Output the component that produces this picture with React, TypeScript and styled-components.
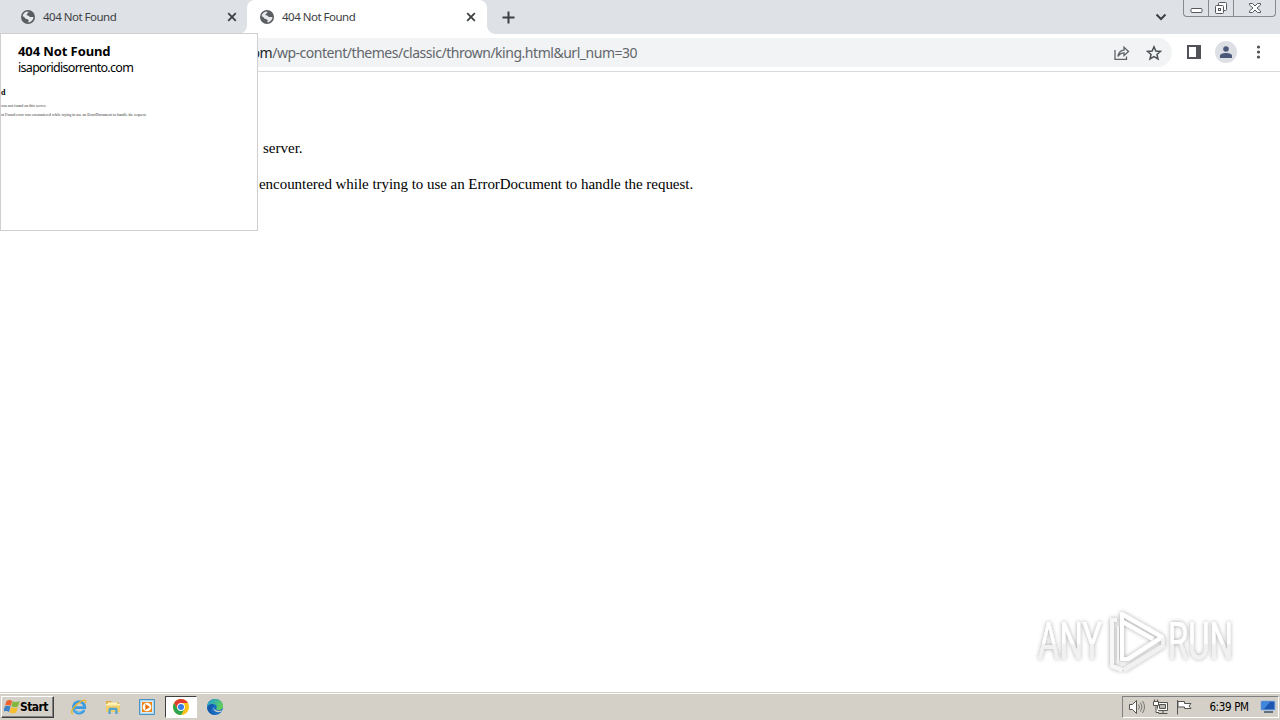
import React from "react";
import styled, { createGlobalStyle } from "styled-components";

const Global = createGlobalStyle`
  * { box-sizing: border-box; }
  body { margin: 0; overflow: hidden; background: #fff; }
`;
const ui = `"DejaVu Sans Condensed", "DejaVu Sans", sans-serif`;
const light = `"Noto Sans", "Open Sans", sans-serif`;

const Screen = styled.div`
  width: 1280px; height: 720px; display: flex; flex-direction: column;
  position: relative; overflow: hidden; background: #fff; font-family: ${light};
`;
const TabStrip = styled.div`
  height: 34px; flex: none; display: flex; background: #dee1e6; color: #3c4043;
`;
const Tab = styled.div<{ $active?: boolean }>`
  width: ${p => (p.$active ? 240 : 247)}px; height: 34px; flex: none;
  display: flex; align-items: center; position: relative;
  padding: 0 9px 0 ${p => (p.$active ? 13 : 21)}px;
  background: ${p => (p.$active ? "#fff" : "transparent")};
  border-radius: 8px 8px 0 0;
  &::before, &::after {
    content: ""; display: ${p => (p.$active ? "block" : "none")};
    position: absolute; bottom: 0; width: 8px; height: 8px;
  }
  &::before { left: -8px; background: radial-gradient(circle at 0 0, transparent 7.5px, #fff 8px); }
  &::after { right: -8px; background: radial-gradient(circle at 100% 0, transparent 7.5px, #fff 8px); }
`;
const TabTitle = styled.span`
  flex: 1; padding-left: 8px; font-size: 11.5px; line-height: 16px; white-space: nowrap;
`;
const Fit = styled.span<{ $ls?: number }>`
  letter-spacing: ${p => p.$ls ?? 0}px; white-space: pre;
`;
const CloseSlot = styled.span<{ $inset: number }>`
  display: flex; margin-right: ${p => p.$inset}px;
`;
const NewTab = styled.div`
  flex: 1; display: flex; align-items: center; padding-left: 15px;
`;
const ChevronSlot = styled.div`
  display: flex; align-items: center; margin-right: 16px;
`;
const Caption = styled.div`
  width: 93px; height: 17px; margin-right: 4px; display: flex;
  border: 1px solid #858990; border-top: 0; border-radius: 0 0 4px 4px;
`;
const CaptionButton = styled.div<{ $w: number }>`
  width: ${p => p.$w}px; display: flex; justify-content: center; align-items: center;
  & + & { border-left: 1px solid #858990; }
`;
const Toolbar = styled.div`
  height: 38px; flex: none; display: flex; align-items: center;
  border-bottom: 1px solid #d8d9dc; background: #fff; padding-bottom: 1px;
`;
const Omnibox = styled.div`
  width: 1172px; height: 29px; display: flex; align-items: center; justify-content: space-between;
  margin-top: 1px; padding: 0 10px 0 242px; border-radius: 0 15px 15px 0; background: #f1f3f4;
`;
const Url = styled.div`
  font-size: 14px; line-height: 20px; color: #62666b; white-space: nowrap;
  b { font-weight: 400; color: #202124; }
`;
const IconRow = styled.div`
  display: flex; align-items: center; gap: 16px;
`;
const ToolIcons = styled.div`
  display: flex; align-items: center; padding: 0 0 0 14px; gap: 13px;
`;
const Avatar = styled.div`
  width: 22px; height: 22px; border-radius: 50%; background: #dcdfe4;
  display: flex; align-items: center; justify-content: center; margin-right: 6px;
`;
const Page = styled.main`
  flex: 1; padding: 67px 0 0 259px;
  font-family: "Liberation Serif", "Times New Roman", serif; font-size: 15px; line-height: 18px; color: #000;
`;
const Para = styled.p<{ $indent?: number }>`
  margin: 0 0 18px ${p => p.$indent ?? 0}px;
`;
const HoverCard = styled.aside`
  position: absolute; left: 0; top: 33px; width: 258px; height: 198px; background: #fff;
  border: 1px solid #cfcfcf; color: #000; display: flex; flex-direction: column; padding-top: 9px;
`;
const CardTitle = styled.div`
  padding-left: 17px; font: 700 13px/17px ${light}; height: 16px;
`;
const CardDomain = styled.div`
  padding-left: 17px; font: 12.5px/17px ${light}; height: 17px;
`;
const Thumb = styled.div`
  padding-top: 11px; font-family: "Liberation Serif", serif; font-size: 3.95px; line-height: 9px; color: #333;
  overflow: hidden;
`;
const ThumbHeading = styled.div`
  font-size: 8px; line-height: 10px; font-weight: 700; color: #000; margin-bottom: 3px; padding-top: 1px;
`;
const ThumbLine = styled.div`
  height: 9px; white-space: nowrap;
`;
const Taskbar = styled.footer`
  height: 28px; flex: none; display: flex; align-items: center; background: #d4d0c8;
  border-top: 1px solid #d4d0c8; box-shadow: inset 0 1px #fff; padding: 1px 1px 0 1px;
`;
const Start = styled.div`
  width: 53px; height: 22px; display: flex; align-items: center; padding-left: 2px;
  border: 1px solid; border-color: #fff #404040 #404040 #fff; box-shadow: inset -1px -1px #808080;
  font: 700 12px/16px ${ui}; color: #000;
`;
const Launch = styled.div`
  display: flex; align-items: center; padding-left: 8px;
`;
const LaunchItem = styled.div<{ $pressed?: boolean }>`
  width: ${p => (p.$pressed ? 32 : 34)}px; height: 22px; display: flex; align-items: center; justify-content: center;
  margin: 0 ${p => (p.$pressed ? 1 : 0)}px;
  border: ${p => (p.$pressed ? "1px solid" : "0")};
  border-color: #404040 #fff #fff #404040;
  background: ${p => (p.$pressed ? "#fff" : "transparent")};
`;
const Tray = styled.div`
  margin-left: auto; width: 157px; height: 22px; display: flex; align-items: center;
  border: 1px solid; border-color: #808080 #fff #fff #808080; padding: 0 1px 0 5px; gap: 6px;
`;
const Clock = styled.div`
  flex: 1; text-align: center; padding-left: 5px; font: 11.5px/16px ${ui}; color: #000; white-space: nowrap;
`;
const Watermark = styled.div`
  position: absolute; left: 1030px; top: 602px; display: flex;
`;
const Letters = styled.text`
  font-family: Roboto, sans-serif; font-size: 51px; fill: url(#mark);
`;

const Globe = () => (
  <svg width="14" height="14" viewBox="0 0 14 14">
    <circle cx="7" cy="7" r="7" fill="#5a5d61" />
    <path d="M7.600 1.600C8 3.200 6.400 3.400 5.800 4.200 5.200 5 6.100 5.500 7.200 5.400 8.200 5.400 8.300 6.400 9 6.900 9.800 7.300 11 6.700 12.500 7.100 12.300 10 10 12.300 7.400 12.500 6.800 11.800 8.100 11 7.600 10 7 8.900 4.400 9.200 4 8 3.700 7.200 2.800 6.600 1.600 6.200 2 3.600 4.400 1.500 7.600 1.600Z" fill="#e6e8ec" />
    <path d="M5.600 1.800 7.400 1.400C8.600 2.800 6.500 3.600 6 4.200 5.700 5 7 5.200 8 5.400L8.700 6.700 12 7 12.600 5 10.400 2 7.500.9Z" fill="#5a5d61" />
  </svg>
);
const Close = () => (
  <svg width="10" height="10" viewBox="0 0 10 10" stroke="#3c4043" strokeWidth="1.8" fill="none">
    <path d="M1.200 1.200l7.600 7.600M8.800 1.200L1.200 8.800" />
  </svg>
);

const StartFlag = () => (
  <svg width="16" height="16" viewBox="1 2 14 12.500">
    <path d="M3.200 3c1.800-1.300 3.300-1.200 5-.1L6.900 7.300c-1.600-1-3.200-1.100-5-.1z" fill="#ed6330" />
    <path d="M8.700 3.200c1.800 1 3.600.9 6-.1l-1.400 4.700c-2 1-4 .9-5.900-.2z" fill="#83b83e" />
    <path d="M1.700 7.900c1.800-1 3.400-1 5 0l-1.300 4.700c-1.700-1.100-3.300-1-5.100-.1z" fill="#3e80c5" />
    <path d="M7.200 8.200c1.900 1.100 3.800 1.100 5.900.2l-1.400 4.700c-2.100 1-4 .9-5.800-.1z" fill="#f6bd2c" />
  </svg>
);
const Explorer = () => (
  <svg width="18" height="18" viewBox="0 0 18 18" fill="none">
    <path d="M14.200 12A5.700 5.700 0 1 1 14.800 9.600H5" stroke="#3b9be0" strokeWidth="2.700" />
    <path d="M13.500 11.500A5.400 5.400 0 0 1 4.200 12" stroke="#69c5f4" strokeWidth="1" />
    <path d="M3 15.800C-1.500 15 5.300 6.400 11.500 3.200c4-2 5.200-.6 3.800 2" stroke="#e8b72e" strokeWidth="1.400" />
  </svg>
);
const Folder = () => (
  <svg width="16" height="16" viewBox="0 0 16 16">
    <path d="M1 2h5l1 1.500h7V13H1z" fill="#dcae43" />
    <path d="M2.500 3.500h10V7h-10z" fill="#fff5bd" />
    <path d="M1 5h14v8H1z" fill="#efcd6b" />
    <path d="M1 5h14v1.500H1z" fill="#fff0b2" />
    <path d="M3.500 15V10.500q0-1.800 1.800-1.800h5.400q1.800 0 1.800 1.800V15h-2.200v-4H5.700v4z" fill="#4fa3cf" />
  </svg>
);
const MediaPlayer = () => (
  <svg width="16" height="16" viewBox="0 0 16 16">
    <path d="M.5.5h15v15H.5z" fill="#a9d5ef" stroke="#4a91c4" />
    <path d="M2.500 2.500h11v11h-11z" fill="#f18719" stroke="#d8ecf8" />
    <circle cx="8" cy="8" r="4.300" fill="#fff" />
    <path d="M6.300 5v6L11 8z" fill="#e6720c" />
  </svg>
);
const Chrome = () => (
  <svg width="16" height="16" viewBox="0 0 16 16">
    <circle cx="8" cy="8" r="8" fill="#fbc116" />
    <path d="M1.100 4A8 8 0 0 1 14.900 4H8L4.500 10z" fill="#e33b2e" />
    <path d="M1.100 4A8 8 0 0 0 8 16l3.500-6H4.500z" fill="#2da44e" />
    <circle cx="8" cy="8" r="3.900" fill="#fff" />
    <circle cx="8" cy="8" r="3" fill="#397de8" />
  </svg>
);
const Edge = () => (
  <svg width="16" height="16" viewBox="0 0 16 16">
    <defs>
      <linearGradient id="edgeTop" x1="0" x2="1" y1="0" y2=".5"><stop stopColor="#1d9be0" /><stop offset="1" stopColor="#62cf5a" /></linearGradient>
    </defs>
    <circle cx="8" cy="8" r="8" fill="#176dc3" />
    <path d="M.1 7C1 2.800 4 .1 8 0c4.800 0 8 3.200 8 7 0 2.500-2 4-4.300 4-1.700 0-3-.6-2.400-1.500C10.800 7.300 8.600 5 5.800 5 3 5 1 6.200.1 8z" fill="url(#edgeTop)" />
    <path d="M6.800 7.500c-1 3 3.300 5.200 7.900 3.900l.3.300-1 1.100c-4 1.500-9-.9-7.200-5.300z" fill="#d4d0c8" />
    <path d="M5.800 5C3 5 .6 6.800.1 9c.5 4 4 7 8 7C3 14 3 8.700 6.300 7z" fill="#1752a0" opacity=".75" />
  </svg>
);

const Logo = () => (
  <svg width="240" height="84" viewBox="0 0 240 84">
    <defs>
      <linearGradient id="mark" x1="0" x2="0" y1="0" y2="1">
        <stop offset=".52" stopColor="#fff" /><stop offset=".56" stopColor="#f1f1f1" />
      </linearGradient>
      <filter id="halo" x="-10%" y="-15%" width="120%" height="130%">
        <feDropShadow dx="0" dy="0" stdDeviation="2" floodColor="#000" floodOpacity=".36" />
      </filter>
    </defs>
    <g filter="url(#halo)">
      <Letters x="8" y="57" textLength="64" lengthAdjust="spacingAndGlyphs">ANY</Letters>
      <Letters x="138" y="57" textLength="65" lengthAdjust="spacingAndGlyphs">RUN</Letters>
      <g fill="none" strokeWidth="4" stroke="#fff" strokeLinejoin="round">
        <path d="M87 18h-5v46l10 4" stroke="#f7f7f7" />
        <path d="M92 57V12l40 23-34 22zM93 20l30 17" />
        <path d="M88 24v37" stroke="#f4f4f4" strokeWidth="2" />
        <path d="M94 68l39-24v-8" stroke="#f1f1f1" />
      </g>
    </g>
  </svg>
);

export default function App() {
  return (
    <Screen>
      <Global />
      <TabStrip>
        <Tab>
          <Globe />
          <TabTitle><Fit $ls={-0.5}>404 Not Found</Fit></TabTitle>
          <CloseSlot $inset={1}><Close /></CloseSlot>
        </Tab>
        <Tab $active>
          <Globe />
          <TabTitle><Fit $ls={-0.5}>404 Not Found</Fit></TabTitle>
          <CloseSlot $inset={2}><Close /></CloseSlot>
        </Tab>
        <NewTab>
          <svg width="13" height="13" stroke="#3c4043" strokeWidth="2"><path d="M6.500.5v12M.5 6.500h12" /></svg>
        </NewTab>
        <ChevronSlot>
          <svg width="12" height="8" fill="none" stroke="#3c4043" strokeWidth="2"><path d="M1.500 1.500L6 6l4.500-4.500" /></svg>
        </ChevronSlot>
        <Caption>
          <CaptionButton $w={24}>
            <svg width="13" height="16"><rect x="1" y="8.500" width="11" height="4" rx="1" fill="#fff" stroke="#55585e" /></svg>
          </CaptionButton>
          <CaptionButton $w={25}>
            <svg width="14" height="16" fill="#fff" stroke="#55585e"><rect x="4.500" y="2.500" width="8" height="8" rx="1" /><rect x="1.500" y="5.500" width="8" height="8" rx="1" /><rect x="4.500" y="8.500" width="2" height="2" /></svg>
          </CaptionButton>
          <CaptionButton $w={42}>
            <svg width="14" height="16" fill="#fff" stroke="#55585e"><path d="M1.500 3.500h3L7 6l2.500-2.500h3V5L9 8l3.500 3v1.500h-3L7 10l-2.500 2.500h-3V11L5 8 1.500 5z" /></svg>
          </CaptionButton>
        </Caption>
      </TabStrip>
      <Toolbar>
        <Omnibox>
          <Url><Fit $ls={-0.47}><b>.com</b>/wp-content/themes/classic/thrown/king.html&amp;url_num=30</Fit></Url>
          <IconRow>
            <svg width="16" height="16" fill="none" stroke="#5f6368" strokeWidth="1.300"><path d="M1 5v9.300h11.500V11.500M4 11.500C4.500 7.500 6.500 5.500 10 5.200V2.300L14.500 6.500 10 10.500V7.800C7.500 7.900 5.500 8.800 4 11.500Z" /></svg>
            <svg width="16" height="16" fill="none" stroke="#4d5156" strokeWidth="1.500"><path d="M8 1.800l1.850 4.250 4.600.4L10.950 9.500 12 14 8 11.600 4 14l1.050-4.500-3.500-3.050 4.600-.4z" /></svg>
          </IconRow>
        </Omnibox>
        <ToolIcons>
          <svg width="16" height="16"><path d="M1 1h14v14H1zM3 3v10h7V3z" fill="#505257" fillRule="evenodd" /></svg>
          <Avatar>
            <svg width="12" height="12" fill="#4b5878"><circle cx="6" cy="3" r="2.800" /><path d="M0 12V9.800C0 7.800 3.500 7 6 7s6 .8 6 2.800V12z" /></svg>
          </Avatar>
          <svg width="5" height="14" fill="#4d5156"><circle cx="2.500" cy="2" r="1.600" /><circle cx="2.500" cy="7" r="1.600" /><circle cx="2.500" cy="12" r="1.600" /></svg>
        </ToolIcons>
      </Toolbar>
      <Page>
        <Para $indent={4}>server.</Para>
        <Para><Fit $ls={-0.04}>encountered while trying to use an ErrorDocument to handle the request.</Fit></Para>
      </Page>
      <Taskbar>
        <Start><StartFlag /><Fit $ls={-0.6}>Start</Fit></Start>
        <Launch>
          <LaunchItem><Explorer /></LaunchItem>
          <LaunchItem><Folder /></LaunchItem>
          <LaunchItem><MediaPlayer /></LaunchItem>
          <LaunchItem $pressed><Chrome /></LaunchItem>
          <LaunchItem><Edge /></LaunchItem>
        </Launch>
        <Tray>
          <svg width="18" height="16" fill="#fff" stroke="#55534e"><path d="M1.500 5.500h3l4-4v13l-4-4h-3z" /><path d="M10.500 5.500q2 2.500 0 5M12.500 3.500q3 4.500 0 9M14.500 2q4 6 0 12" fill="none" stroke="#77756f" /></svg>
          <svg width="18" height="16" fill="#fff" stroke="#55534e"><path d="M5.500 3.500h10v8h-10z" /><path d="M7.500 5.500h6v4h-6z" fill="#b8b6b0" /><path d="M11 12v2.500M6.500 14.500h9M1.500 2.500h5v4h-5zM4 6.500v7h3M2.500.5v2M5.500.5v2" /></svg>
          <svg width="17" height="16" fill="#fff" stroke="#55534e"><path d="M1.500 1v14.500M2 2.500h6.500v2h6.500l-2 2.500 2 2.500H8.500v-1.500H2z" /></svg>
          <Clock><Fit $ls={-0.35}>6:39 PM</Fit></Clock>
          <svg width="17" height="14"><path d="M1 1h14v9H1z" fill="#1c56b0" stroke="#8eb6e4" /><path d="M2 2h8L4 9H2z" fill="#3d87dc" /><path d="M4 12h9" stroke="#61717f" strokeWidth="2" /></svg>
        </Tray>
      </Taskbar>
      <HoverCard>
        <CardTitle><Fit $ls={-0.1}>404 Not Found</Fit></CardTitle>
        <CardDomain><Fit $ls={-0.7}>isaporidisorrento.com</Fit></CardDomain>
        <Thumb>
          <ThumbHeading>d</ThumbHeading>
          <ThumbLine>was not found on this server.</ThumbLine>
          <ThumbLine><Fit>ot Found error was encountered while trying to use an ErrorDocument to handle the request.</Fit></ThumbLine>
        </Thumb>
      </HoverCard>
      <Watermark><Logo /></Watermark>
    </Screen>
  );
}
